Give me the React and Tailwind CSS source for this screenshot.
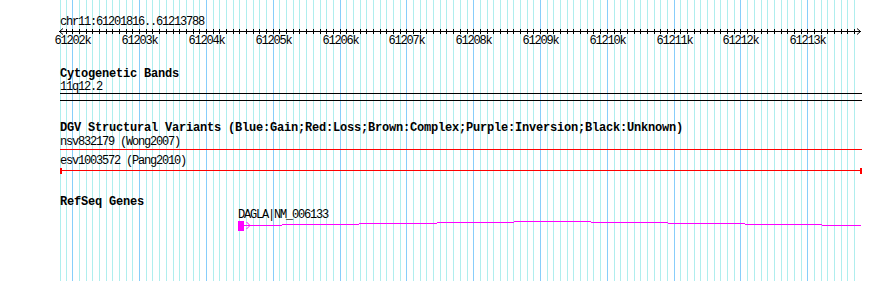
import React from "react";

const START = 61201816;
const END = 61213788;
const LEFT = 60;
const SPAN = 800;

const px = (bp) => Math.round(LEFT + ((bp - START) * SPAN) / (END - START + 1));

const gridLines = () => {
  const lines = [{ x: LEFT, major: false }];
  for (let bp = 61201900; bp <= END; bp += 100) {
    lines.push({ x: px(bp), major: bp % 1000 === 0 });
  }
  return lines;
};

const majors = [];
for (let bp = 61202000; bp <= END; bp += 1000) majors.push(bp);

// intron hat of the DAGLA transcript, drawn in pixel steps
const intron = [
  [244, 282, 225],
  [282, 359, 224],
  [359, 437, 223],
  [437, 514, 222],
  [514, 591, 221],
  [591, 668, 222],
  [668, 745, 223],
  [745, 822, 224],
  [822, 861, 225],
];

const mono = "font-['Liberation_Mono',monospace] text-[12px] tracking-[-1.2px] text-black whitespace-pre";
const bold = "font-['Liberation_Mono',monospace] text-[12px] font-bold tracking-[-0.2px] text-black whitespace-pre";

const App = () => {
  const lines = gridLines();

  return (
    <main className="relative w-[890px] h-[281px] bg-white overflow-hidden">
      <svg className="absolute inset-0" width="890" height="281" shapeRendering="crispEdges">
        {lines.map((l, i) => (
          <rect key={i} x={l.x} y="0" width="1" height="281" fill={l.major ? "#87cefa" : "#afeeee"} />
        ))}
      </svg>

      <div className="relative flex flex-col">
        <div className={`${mono} h-[10px] leading-[10px] mt-[17px] pl-[60px]`}>chr11:61201816..61213788</div>

        <svg width="890" height="8" className="block">
          <rect x="59" y="4" width="802" height="1" fill="#000" shapeRendering="crispEdges" />
          {lines.slice(1).map((l, i) => (
            <rect key={i} x={l.x} y="2" width="1" height="5" fill="#000" shapeRendering="crispEdges" />
          ))}
          <polyline points="63,1.5 59.5,4.5 63,7.5" fill="none" stroke="#000" strokeWidth="1" />
          <polyline points="857,1.5 860.5,4.5 857,7.5" fill="none" stroke="#000" strokeWidth="1" />
        </svg>

        <div className="relative h-[13px]">
          {majors.map((bp) => (
            <span
              key={bp}
              className={`${mono} absolute top-0 leading-[13px] -translate-x-1/2`}
              style={{ left: px(bp) + 0.5 }}
            >
              {`${Math.round(bp / 1000)}k`}
            </span>
          ))}
        </div>

        <div className={`${bold} h-[13px] leading-[13px] mt-[20px] pl-[60px]`}>Cytogenetic Bands</div>
        <div className={`${mono} h-[12px] leading-[12px] pl-[60px]`}>11q12.2</div>
        <svg width="890" height="8" className="block" shapeRendering="crispEdges">
          <rect x="60" y="0" width="802" height="1" fill="#000" />
          <rect x="60" y="7" width="802" height="1" fill="#000" />
        </svg>

        <div className={`${bold} h-[13px] leading-[13px] mt-[21px] pl-[60px]`}>
          DGV Structural Variants (Blue:Gain;Red:Loss;Brown:Complex;Purple:Inversion;Black:Unknown)
        </div>
        <div className={`${mono} h-[14px] leading-[14px] pl-[60px]`}>nsv832179 (Wong2007)</div>
        <svg width="890" height="6" className="block" shapeRendering="crispEdges">
          <rect x="60" y="0" width="802" height="1" fill="#ff0000" />
        </svg>
        <div className={`${mono} h-[13px] leading-[13px] pl-[60px]`}>esv1003572 (Pang2010)</div>
        <svg width="890" height="6" className="block" shapeRendering="crispEdges">
          <rect x="60" y="2" width="802" height="1" fill="#ff0000" />
          <rect x="60" y="0" width="2" height="6" fill="#ff0000" />
          <rect x="860" y="0" width="2" height="6" fill="#ff0000" />
        </svg>

        <div className={`${bold} h-[13px] leading-[13px] mt-[22px] pl-[60px]`}>RefSeq Genes</div>
        <div className={`${mono} h-[12px] leading-[12px] pl-[238px]`}>DAGLA|NM_006133</div>
        <svg width="890" height="10" className="block">
          <rect x="238" y="0" width="6" height="10" fill="#ff00ff" shapeRendering="crispEdges" />
          {intron.map(([x1, x2, y]) => (
            <rect key={x1} x={x1} y={y - 221} width={x2 - x1} height="1" fill="#ff00ff" shapeRendering="crispEdges" />
          ))}
          <polyline points="246.5,1 250,4.5 246.5,8" fill="none" stroke="#ff00ff" strokeWidth="1" />
        </svg>
      </div>
    </main>
  );
};

export default App;
